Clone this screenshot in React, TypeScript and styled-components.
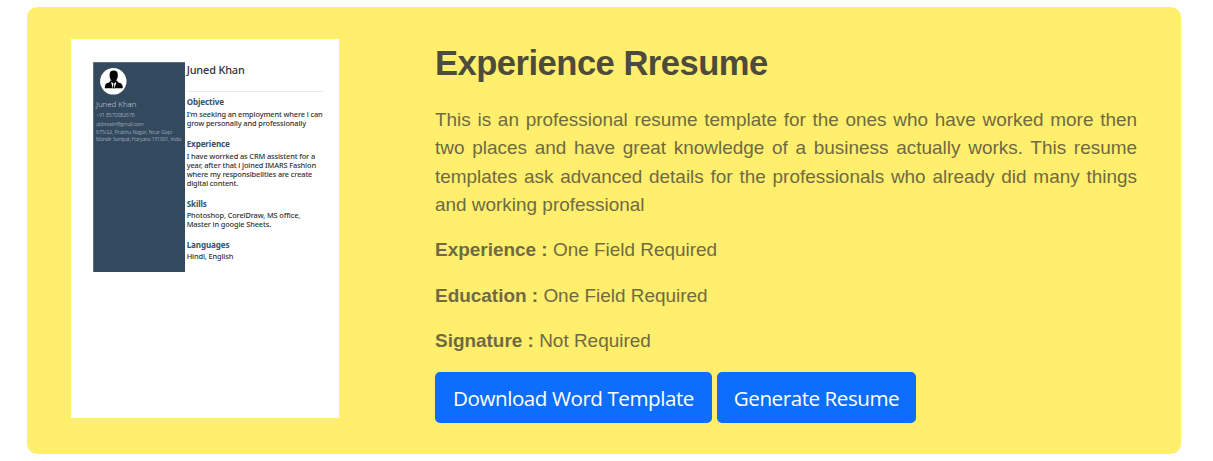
import React from "react";
import styled, { createGlobalStyle } from "styled-components";

const GlobalStyle = createGlobalStyle`
  * { box-sizing: border-box; }
  body { margin: 0; background: #fff; }
`;

const Page = styled.main`
  padding: 7px 32px 7px 27px;
`;

const Card = styled.article`
  display: flex;
  height: 447px;
  padding: 32px 44px 31px;
  gap: 96px;
  background: #ffef6c;
  border-radius: 10px;
`;

const Preview = styled.div`
  display: flex;
  flex: none;
  width: 268px;
  height: 379px;
  padding: 23px 15px 0 22px;
  background: #fff;
  font-family: "Noto Sans", "Open Sans", sans-serif;
`;

const Sidebar = styled.div`
  flex: none;
  width: 92px;
  height: 210px;
  padding: 6px 0 0 3px;
  background: #33495d;
  box-shadow: inset 0 1px #5d6e7d, inset 1px 0 #5d6e7d;
  color: #d4dae0;
  font-family: "Open Sans", sans-serif;
  font-weight: 300;
`;

const Avatar = styled.svg`
  display: block;
  margin-left: 4px;
`;

const Line = styled.div<{ $size: number; $height: number; $gap?: number; $track?: number }>`
  margin-top: ${(p) => p.$gap ?? 0}px;
  font-size: ${(p) => p.$size}px;
  line-height: ${(p) => p.$height}px;
  letter-spacing: ${(p) => p.$track ?? 0}px;
  white-space: nowrap;
`;

const Sheet = styled.div`
  flex: 1;
  padding-left: 1.7px;
  color: #303234;
  font-weight: 500;
`;

const Name = styled.div`
  height: 30px;
  border-bottom: 1px solid #ebebeb;
  font-size: 10.9px;
  line-height: 15px;
  letter-spacing: -0.15px;
  white-space: nowrap;
`;

const Section = styled.section<{ $gap: number }>`
  margin-top: ${(p) => p.$gap}px;
`;

const SectionTitle = styled.div`
  margin-bottom: 1.5px;
  color: #34526b;
  font-size: 8.1px;
  font-weight: 700;
  line-height: 12px;
  letter-spacing: -0.12px;
`;

const Details = styled.div`
  flex: none;
  width: 702px;
  color: #6f6a43;
  font-family: "Liberation Sans", Arial, sans-serif;
  font-size: 18.96px;
  line-height: 28.5px;
`;

const Title = styled.h2`
  margin: 3px 0 20.8px;
  color: #4d4b3b;
  font-size: 34.6px;
  line-height: 43px;
  letter-spacing: -0.52px;
`;

const Text = styled.p`
  margin: 0 0 17px;
  text-align: justify;
`;

const Description = styled(Text)`
  margin-bottom: 16.4px;
`;

const Actions = styled.div`
  display: flex;
  gap: 5px;
  margin-top: -0.7px;
`;

const Button = styled.button<{ $width: number }>`
  width: ${(p) => p.$width}px;
  height: 51px;
  padding: 1px 0 0;
  border: 0;
  border-radius: 5px;
  background: #0d6efd;
  color: #fff;
  font-family: "Open Sans", sans-serif;
  font-size: 20.6px;
  letter-spacing: -0.45px;
  white-space: nowrap;
`;

const sections = [
  {
    title: "Objective",
    gap: 4.2,
    lines: ["I'm seeking an employment where i can", "grow personally and professionally"],
  },
  {
    title: "Experience",
    gap: 10.2,
    lines: [
      "I have worrked as CRM assistent for a",
      "year, after that i joined IMARS Fashion",
      "where my responsibelities are create",
      "digital content.",
    ],
  },
  { title: "Skills", gap: 9.2, lines: ["Photoshop, CorelDraw, MS office,", "Master in google Sheets."] },
  { title: "Languages", gap: 9.2, lines: ["Hindi, English"] },
];

const requirements = [
  ["Experience", "One Field Required"],
  ["Education", "One Field Required"],
  ["Signature", "Not Required"],
];

export default function App() {
  return (
    <Page>
      <GlobalStyle />
      <Card>
        <Preview>
          <Sidebar>
            <Avatar width="27" height="27" viewBox="0 0 27 27">
              <circle cx="13.3" cy="13.3" r="13.2" fill="#fff" />
              <path d="M9.6 7.2C9.5 4 11 2.6 13.7 2.6S17.9 4 17.8 7.2c0 3.6-1.7 6.3-4.1 6.3S9.6 10.8 9.6 7.2Z" fill="#050505" />
              <path d="M10.4 12.5h6.6c.5 1.5 1.5 2 3.3 2.6 1.8.6 2.4 2.4 2.5 5.2H4.8c.1-2.8.6-4.6 2.4-5.2 1.7-.6 2.8-1.1 3.2-2.6Z" fill="#050505" />
              <path d="m11.1 14 2.6 1.4 2.6-1.4-1.6 5.9h-2Z" fill="#fff" />
              <path d="M13.1 15.2h1.2l-.2 1.2.4 3.9h-1.6l.4-3.9Z" fill="#050505" />
            </Avatar>
            <Line $size={7.9} $height={10} $gap={4}>Juned Khan</Line>
            <Line $size={5.2} $height={8} $gap={2.4} $track={-0.08}>+91 8570082676</Line>
            <Line $size={5.2} $height={8} $gap={1} $track={-0.08}>abbrosin@gmail.com</Line>
            <Line $size={5.2} $height={7} $gap={1} $track={-0.05}>675/22, Prabhu Nagar, Near Gopi</Line>
            <Line $size={5.2} $height={7} $track={-0.14}>Mandir Sonipat, Haryana 131001, India</Line>
          </Sidebar>
          <Sheet>
            <Name>Juned Khan</Name>
            {sections.map((s) => (
              <Section key={s.title} $gap={s.gap}>
                <SectionTitle>{s.title}</SectionTitle>
                {s.lines.map((text) => (
                  <Line key={text} $size={7.4} $height={9.15} $track={-0.12}>{text}</Line>
                ))}
              </Section>
            ))}
          </Sheet>
        </Preview>
        <Details>
          <Title>Experience Rresume</Title>
          <Description>
            This is an professional resume template for the ones who have worked more then two places and have great
            knowledge of a business actually works. This resume templates ask advanced details for the professionals who
            already did many things and working professional
          </Description>
          {requirements.map(([label, value]) => (
            <Text key={label}>
              <b>{label} :</b> {value}
            </Text>
          ))}
          <Actions>
            <Button $width={277}>Download Word Template</Button>
            <Button $width={199}>Generate Resume</Button>
          </Actions>
        </Details>
      </Card>
    </Page>
  );
}
